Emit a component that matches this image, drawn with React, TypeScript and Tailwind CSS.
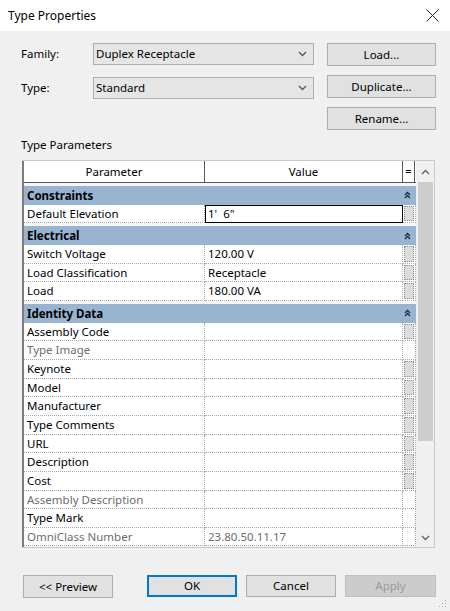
import React from 'react'

type Row =
  | { cat: string }
  | { label: string; value?: string; gray?: boolean; btn?: boolean; edit?: boolean }

const rows: Row[] = [
  { cat: 'Constraints' },
  { label: 'Default Elevation', value: '1\'  6"', edit: true, btn: true },
  { cat: 'Electrical' },
  { label: 'Switch Voltage', value: '120.00 V', btn: true },
  { label: 'Load Classification', value: 'Receptacle', btn: true },
  { label: 'Load', value: '180.00 VA', btn: true },
  { cat: 'Identity Data' },
  { label: 'Assembly Code', btn: true },
  { label: 'Type Image', gray: true },
  { label: 'Keynote', btn: true },
  { label: 'Model', btn: true },
  { label: 'Manufacturer', btn: true },
  { label: 'Type Comments', btn: true },
  { label: 'URL', btn: true },
  { label: 'Description', btn: true },
  { label: 'Cost', btn: true },
  { label: 'Assembly Description', gray: true },
  { label: 'Type Mark' },
  { label: 'OmniClass Number', value: '23.80.50.11.17', gray: true },
]

function Chevron({ up = false, color = '#606060' }: { up?: boolean; color?: string }) {
  return (
    <svg width="9" height="6" viewBox="0 0 9 6">
      <path d={up ? 'M1 5 L4.5 1.5 L8 5' : 'M1 1 L4.5 4.5 L8 1'} fill="none" stroke={color} strokeWidth="1.3" />
    </svg>
  )
}

function DoubleUp() {
  return (
    <svg width="7" height="8" viewBox="0 0 7 8">
      <path d="M1 4 L3.5 1.5 L6 4 M1 7 L3.5 4.5 L6 7" fill="none" stroke="#1e2a3a" strokeWidth="1.3" />
    </svg>
  )
}

function Combo({ text }: { text: string }) {
  return (
    <div className="w-[221px] h-[22px] bg-[#e5e5e5] border border-[#adadad] flex items-center justify-between pl-[2px] pr-[6px]">
      <span>{text}</span>
      <Chevron color="#555" />
    </div>
  )
}

function Btn({ children, className = '' }: { children: React.ReactNode; className?: string }) {
  return (
    <div className={`h-[23px] bg-[#e1e1e1] border border-[#adadad] flex items-center justify-center ${className}`}>
      {children}
    </div>
  )
}

export default function App() {
  return (
    <div className="w-[450px] h-[611px] bg-[#f0f0f0] text-black text-[11.5px] font-['Noto_Sans',sans-serif] flex flex-col relative overflow-hidden">
      <div className="h-[31px] bg-white flex items-center justify-between pl-[8px] pr-[11px]">
        <span className="text-[12px]">Type Properties</span>
        <svg width="13" height="13" viewBox="0 0 13 13">
          <path d="M0.5 0.5 L12.5 12.5 M12.5 0.5 L0.5 12.5" stroke="#222" strokeWidth="1" />
        </svg>
      </div>

      <div className="flex mt-[12px] pl-[21px]">
        <div className="flex flex-col gap-[12px] w-[306px]">
          <div className="flex items-center">
            <span className="w-[72px]">Family:</span>
            <Combo text="Duplex Receptacle" />
          </div>
          <div className="flex items-center">
            <span className="w-[72px]">Type:</span>
            <Combo text="Standard" />
          </div>
        </div>
        <div className="flex flex-col gap-[9px] w-[109px]">
          <Btn>Load...</Btn>
          <Btn>Duplicate...</Btn>
          <Btn>Rename...</Btn>
        </div>
      </div>

      <div className="pl-[21px] mt-[8px] h-[14px] leading-[14px]">Type Parameters</div>

      <div className="ml-[22px] mt-[8px] w-[413px] h-[388px] flex border-t border-r border-b border-[#c8c8c8]">
        <div className="w-[394px] border-l-2 border-[#7d7d7d] bg-[#f6f6f6] flex flex-col">
          <div className="h-[22px] bg-white flex border-b border-[#5a5a5a] shrink-0">
            <div className="w-[181px] border-r border-[#5a5a5a] flex items-center justify-center">Parameter</div>
            <div className="w-[198px] border-r border-[#5a5a5a] flex items-center justify-center">Value</div>
            <div className="w-[12px] border-r border-[#5a5a5a] flex items-center justify-center text-[11px]">=</div>
          </div>
          {rows.map((r, i) =>
            'cat' in r ? (
              <div
                key={i}
                className="h-[18.67px] mt-[3px] bg-[#99b4d1] font-bold flex items-center justify-between pl-[3px] pr-[5px] shrink-0"
              >
                <span>{r.cat}</span>
                <DoubleUp />
              </div>
            ) : (
              <div key={i} className="h-[18.67px] bg-white flex shrink-0">
                <div
                  className={`w-[181px] border-r border-b border-dotted border-[#a8a8a8] pl-[3px] flex items-center ${
                    r.gray ? 'text-[#6d6d6d]' : ''
                  }`}
                >
                  {r.label}
                </div>
                {r.edit ? (
                  <div className="w-[198px] border-[1.5px] border-black pl-[2px] flex items-center whitespace-pre">
                    {r.value}
                  </div>
                ) : (
                  <div
                    className={`w-[198px] border-r border-b border-dotted border-[#a8a8a8] pl-[3px] flex items-center ${
                      r.gray ? 'text-[#6d6d6d]' : ''
                    }`}
                  >
                    {r.value ?? ''}
                  </div>
                )}
                <div className="w-[13px] border-r border-b border-dotted border-[#a8a8a8] p-[1px]">
                  {r.btn && <div className="h-full bg-[#dcdcdc] border border-dotted border-[#8f8f8f]" />}
                </div>
              </div>
            )
          )}
        </div>
        <div className="flex-1 flex flex-col bg-[#f0f0f0] ml-[1px]">
          <div className="h-[21px] flex items-center justify-center shrink-0">
            <Chevron up />
          </div>
          <div className="h-[259px] mx-[1px] bg-[#cdcdcd]" />
          <div className="flex-1" />
          <div className="h-[18px] flex items-center justify-center shrink-0">
            <Chevron />
          </div>
        </div>
      </div>

      <div className="flex mt-[27px] pl-[23px]">
        <Btn className="w-[90px]">&lt;&lt; Preview</Btn>
        <div className="w-[90px] h-[22px] ml-[34px] bg-[#e1e1e1] border-2 border-[#0078d7] flex items-center justify-center">
          OK
        </div>
        <Btn className="w-[90px] ml-[9px] !h-[22px]">Cancel</Btn>
        <div className="w-[91px] h-[22px] ml-[9px] bg-[#cccccc] border border-[#bfbfbf] text-[#9a9a9a] flex items-center justify-center">
          Apply
        </div>
      </div>

      <svg className="absolute right-[3px] bottom-[3px]" width="8" height="8" viewBox="0 0 8 8">
        <g fill="#b0b0b0">
          <rect x="6" y="0" width="1" height="1" />
          <rect x="3" y="3" width="1" height="1" />
          <rect x="6" y="3" width="1" height="1" />
          <rect x="0" y="6" width="1" height="1" />
          <rect x="3" y="6" width="1" height="1" />
          <rect x="6" y="6" width="1" height="1" />
        </g>
      </svg>
    </div>
  )
}
